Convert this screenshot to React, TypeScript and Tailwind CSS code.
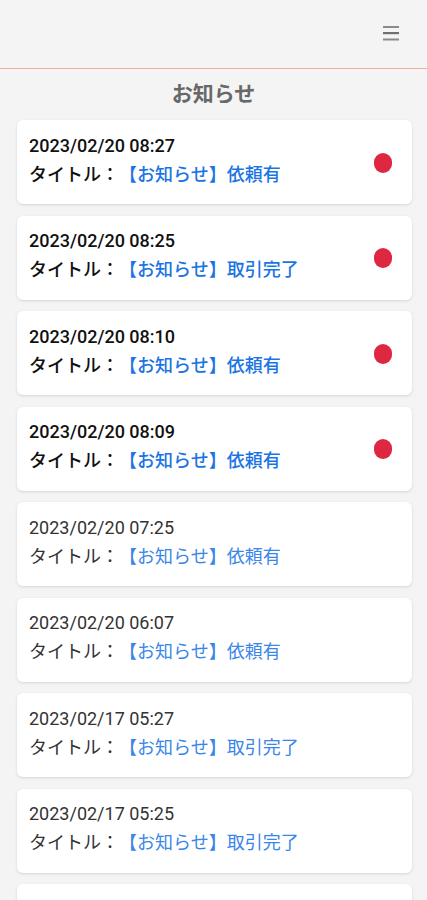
import React from "react";

type Item = { date: string; title: string; unread: boolean };

const items: Item[] = [
  { date: "2023/02/20 08:27", title: "【お知らせ】依頼有", unread: true },
  { date: "2023/02/20 08:25", title: "【お知らせ】取引完了", unread: true },
  { date: "2023/02/20 08:10", title: "【お知らせ】依頼有", unread: true },
  { date: "2023/02/20 08:09", title: "【お知らせ】依頼有", unread: true },
  { date: "2023/02/20 07:25", title: "【お知らせ】依頼有", unread: false },
  { date: "2023/02/20 06:07", title: "【お知らせ】依頼有", unread: false },
  { date: "2023/02/17 05:27", title: "【お知らせ】取引完了", unread: false },
  { date: "2023/02/17 05:25", title: "【お知らせ】取引完了", unread: false },
];

export default function App() {
  return (
    <div
      className="h-[900px] w-full bg-[#f4f4f4] overflow-hidden [text-spacing-trim:space-all]"
      style={{ fontFamily: 'Roboto, "Noto Sans CJK JP", sans-serif' }}
    >
      <header className="h-[68.5px] bg-[#f4f4f4] border-b-[1.5px] border-[#f3ad9d] flex items-center justify-end pr-[28px]">
        <svg width="16" height="16" viewBox="0 0 16 16" className="mb-[2px]">
          <rect x="0" y="1" width="16" height="2" fill="#8a8a8a" />
          <rect x="0" y="7" width="16" height="2.2" fill="#6f6f6f" />
          <rect x="0" y="13.5" width="16" height="2" fill="#8a8a8a" />
        </svg>
      </header>
      <div className="h-[51.5px] flex items-center justify-center">
        <h1 className="text-[21px] font-bold text-[#686868] leading-none">お知らせ</h1>
      </div>
      <div className="flex flex-col gap-[11.5px] pl-[17px] pr-[15px]">
        {items.map((it, i) => (
          <div
            key={i}
            className="h-[84px] shrink-0 bg-white rounded-[6px] shadow-[0_1px_3px_rgba(0,0,0,0.13)] flex items-start justify-between pl-[12px] pr-[20px]"
          >
            <div className="pt-[10.5px] flex flex-col">
              <div
                className={
                  "h-[29px] leading-[29px] text-[18px] " +
                  (it.unread ? "font-medium text-[#111]" : "font-normal text-[#333]")
                }
              >
                {it.date}
              </div>
              <div
                className={
                  "h-[29px] leading-[29px] text-[18px] whitespace-nowrap [text-spacing-trim:space-all] " +
                  (it.unread ? "font-medium" : "font-normal")
                }
              >
                <span className={it.unread ? "text-[#111]" : "text-[#333]"}>タイトル：</span>
                <span className={it.unread ? "text-[#1b74e4]" : "text-[#3a86ea]"}>{it.title}</span>
              </div>
            </div>
            {it.unread && (
              <div className="self-center w-[18px] h-[20px] rounded-full bg-[#de2741] mt-[1px]" />
            )}
          </div>
        ))}
        <div className="h-[84px] shrink-0 bg-white rounded-[6px] shadow-[0_1px_3px_rgba(0,0,0,0.13)]" />
      </div>
    </div>
  );
}
